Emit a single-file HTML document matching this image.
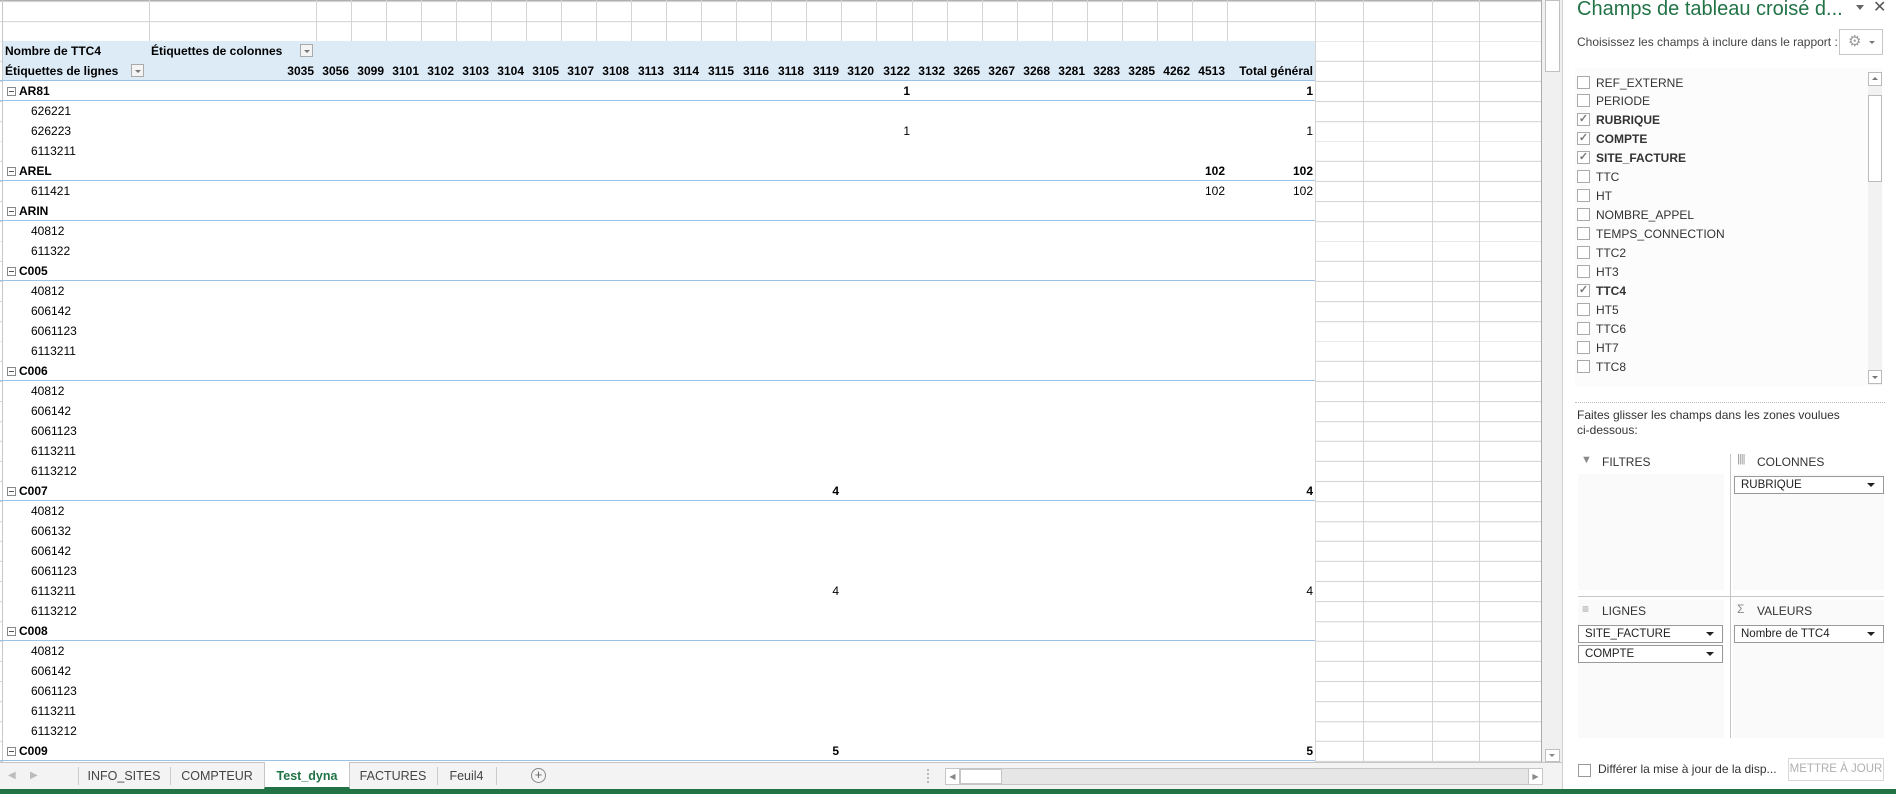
<!DOCTYPE html>
<html><head><meta charset="utf-8"><style>
*{margin:0;padding:0;box-sizing:border-box}
body{width:1896px;height:794px;overflow:hidden;background:#fff;font-family:"Liberation Sans",sans-serif;position:relative;color:#000}
.a{position:absolute}
.vl{position:absolute;top:0;width:1px;background:#d4d4d4}
.c{position:absolute;height:20px;line-height:20px;font-size:12px;white-space:nowrap}
.r{text-align:right;padding-right:2px}
.b{font-weight:bold}
.gl{position:absolute;left:0;width:1315px;height:1px;background:#9bc2e6}
.box{position:absolute;left:7px;width:9px;height:9px;border:1px solid #888;background:#fff}
.box:after{content:"";position:absolute;left:1px;top:3px;width:5px;height:1px;background:#555}
.fi{position:absolute;left:1577px;height:19px;line-height:19px;font-size:12px;color:#333;white-space:nowrap}
.cb{display:inline-block;width:13px;height:13px;border:1px solid #aaa;background:#fff;vertical-align:middle;margin-top:-2px;margin-right:6px;position:relative;font-size:11px;line-height:11px;color:#777;text-align:center}
.zb{position:absolute;height:18px;border:1px solid #999;background:#fff;font-size:11.5px;line-height:16px;padding-left:6px;color:#222}
.zb:after{content:"";position:absolute;right:8px;top:6px;border-left:4px solid transparent;border-right:4px solid transparent;border-top:4px solid #222}
.zl{position:absolute;font-size:12px;color:#333}
.tab{position:absolute;top:764px;height:24px;line-height:24px;font-size:12.5px;color:#444;text-align:center}
</style></head><body>
<div class="a" style="left:0;top:0;width:1542px;height:762px;background:repeating-linear-gradient(to bottom,#d4d4d4 0,#d4d4d4 1px,transparent 1px,transparent 20px);background-position:0 1px"></div>
<div class="a" style="left:0;top:0;width:1542px;height:1px;background:#b0b0b0"></div>
<div class="a" style="left:2px;top:0;width:1px;height:762px;background:#c8c8c8"></div>
<div class="vl" style="left:149px;height:762px"></div><div class="vl" style="left:316px;height:762px"></div>
<div class="vl" style="left:351px;height:762px"></div><div class="vl" style="left:386px;height:762px"></div><div class="vl" style="left:421px;height:762px"></div><div class="vl" style="left:456px;height:762px"></div><div class="vl" style="left:491px;height:762px"></div><div class="vl" style="left:526px;height:762px"></div><div class="vl" style="left:561px;height:762px"></div><div class="vl" style="left:596px;height:762px"></div><div class="vl" style="left:631px;height:762px"></div><div class="vl" style="left:666px;height:762px"></div><div class="vl" style="left:701px;height:762px"></div><div class="vl" style="left:736px;height:762px"></div><div class="vl" style="left:771px;height:762px"></div><div class="vl" style="left:806px;height:762px"></div><div class="vl" style="left:841px;height:762px"></div><div class="vl" style="left:876px;height:762px"></div><div class="vl" style="left:912px;height:762px"></div><div class="vl" style="left:947px;height:762px"></div><div class="vl" style="left:982px;height:762px"></div><div class="vl" style="left:1017px;height:762px"></div><div class="vl" style="left:1052px;height:762px"></div><div class="vl" style="left:1087px;height:762px"></div><div class="vl" style="left:1122px;height:762px"></div><div class="vl" style="left:1157px;height:762px"></div><div class="vl" style="left:1192px;height:762px"></div><div class="vl" style="left:1227px;height:762px"></div><div class="vl" style="left:1315px;height:762px"></div><div class="vl" style="left:1363px;height:762px"></div><div class="vl" style="left:1432px;height:762px"></div><div class="vl" style="left:1479px;height:762px"></div>
<div class="a" style="left:1541px;top:0;width:1px;height:762px;background:#aaa"></div>
<div class="a" style="left:3px;top:41px;width:1312px;height:721px;background:#fff"></div>
<div class="a" style="left:3px;top:41px;width:1312px;height:40px;background:#ddebf7"></div>
<div class="gl" style="top:80px"></div>
<div class="c b" style="left:5px;top:41px">Nombre de TTC4</div>
<div class="c b" style="left:151px;top:41px">Étiquettes de colonnes</div>
<div class="a" style="left:300px;top:44px;width:13px;height:13px;border:1px solid #aaa;background:#f4f4f4"><div class="a" style="left:3px;top:5px;border-left:3px solid transparent;border-right:3px solid transparent;border-top:3px solid #777"></div></div>
<div class="c b" style="left:5px;top:61px">Étiquettes de lignes</div>
<div class="a" style="left:131px;top:64px;width:13px;height:13px;border:1px solid #aaa;background:#f4f4f4"><div class="a" style="left:3px;top:5px;border-left:3px solid transparent;border-right:3px solid transparent;border-top:3px solid #777"></div></div>
<div class="c b r" style="left:149px;top:61px;width:167px">3035</div>
<div class="c b r" style="left:316px;top:61px;width:35px">3056</div><div class="c b r" style="left:351px;top:61px;width:35px">3099</div><div class="c b r" style="left:386px;top:61px;width:35px">3101</div><div class="c b r" style="left:421px;top:61px;width:35px">3102</div><div class="c b r" style="left:456px;top:61px;width:35px">3103</div><div class="c b r" style="left:491px;top:61px;width:35px">3104</div><div class="c b r" style="left:526px;top:61px;width:35px">3105</div><div class="c b r" style="left:561px;top:61px;width:35px">3107</div><div class="c b r" style="left:596px;top:61px;width:35px">3108</div><div class="c b r" style="left:631px;top:61px;width:35px">3113</div><div class="c b r" style="left:666px;top:61px;width:35px">3114</div><div class="c b r" style="left:701px;top:61px;width:35px">3115</div><div class="c b r" style="left:736px;top:61px;width:35px">3116</div><div class="c b r" style="left:771px;top:61px;width:35px">3118</div><div class="c b r" style="left:806px;top:61px;width:35px">3119</div><div class="c b r" style="left:841px;top:61px;width:35px">3120</div><div class="c b r" style="left:876px;top:61px;width:36px">3122</div><div class="c b r" style="left:912px;top:61px;width:35px">3132</div><div class="c b r" style="left:947px;top:61px;width:35px">3265</div><div class="c b r" style="left:982px;top:61px;width:35px">3267</div><div class="c b r" style="left:1017px;top:61px;width:35px">3268</div><div class="c b r" style="left:1052px;top:61px;width:35px">3281</div><div class="c b r" style="left:1087px;top:61px;width:35px">3283</div><div class="c b r" style="left:1122px;top:61px;width:35px">3285</div><div class="c b r" style="left:1157px;top:61px;width:35px">4262</div><div class="c b r" style="left:1192px;top:61px;width:35px">4513</div><div class="c b r" style="left:1227px;top:61px;width:88px">Total général</div>

<div class="box" style="top:87px"></div><div class="c b" style="left:19px;top:81px">AR81</div><div class="gl" style="top:100px"></div>
<div class="c b r" style="left:876px;top:81px;width:36px">1</div><div class="c b r" style="left:1227px;top:81px;width:88px">1</div>
<div class="c" style="left:31px;top:101px">626221</div>
<div class="c" style="left:31px;top:121px">626223</div><div class="c r" style="left:876px;top:121px;width:36px">1</div><div class="c r" style="left:1227px;top:121px;width:88px">1</div>
<div class="c" style="left:31px;top:141px">6113211</div>
<div class="box" style="top:167px"></div><div class="c b" style="left:19px;top:161px">AREL</div><div class="gl" style="top:180px"></div>
<div class="c b r" style="left:1192px;top:161px;width:35px">102</div><div class="c b r" style="left:1227px;top:161px;width:88px">102</div>
<div class="c" style="left:31px;top:181px">611421</div><div class="c r" style="left:1192px;top:181px;width:35px">102</div><div class="c r" style="left:1227px;top:181px;width:88px">102</div>
<div class="box" style="top:207px"></div><div class="c b" style="left:19px;top:201px">ARIN</div><div class="gl" style="top:220px"></div>
<div class="c" style="left:31px;top:221px">40812</div>
<div class="c" style="left:31px;top:241px">611322</div>
<div class="box" style="top:267px"></div><div class="c b" style="left:19px;top:261px">C005</div><div class="gl" style="top:280px"></div>
<div class="c" style="left:31px;top:281px">40812</div>
<div class="c" style="left:31px;top:301px">606142</div>
<div class="c" style="left:31px;top:321px">6061123</div>
<div class="c" style="left:31px;top:341px">6113211</div>
<div class="box" style="top:367px"></div><div class="c b" style="left:19px;top:361px">C006</div><div class="gl" style="top:380px"></div>
<div class="c" style="left:31px;top:381px">40812</div>
<div class="c" style="left:31px;top:401px">606142</div>
<div class="c" style="left:31px;top:421px">6061123</div>
<div class="c" style="left:31px;top:441px">6113211</div>
<div class="c" style="left:31px;top:461px">6113212</div>
<div class="box" style="top:487px"></div><div class="c b" style="left:19px;top:481px">C007</div><div class="gl" style="top:500px"></div>
<div class="c b r" style="left:806px;top:481px;width:35px">4</div><div class="c b r" style="left:1227px;top:481px;width:88px">4</div>
<div class="c" style="left:31px;top:501px">40812</div>
<div class="c" style="left:31px;top:521px">606132</div>
<div class="c" style="left:31px;top:541px">606142</div>
<div class="c" style="left:31px;top:561px">6061123</div>
<div class="c" style="left:31px;top:581px">6113211</div><div class="c r" style="left:806px;top:581px;width:35px">4</div><div class="c r" style="left:1227px;top:581px;width:88px">4</div>
<div class="c" style="left:31px;top:601px">6113212</div>
<div class="box" style="top:627px"></div><div class="c b" style="left:19px;top:621px">C008</div><div class="gl" style="top:640px"></div>
<div class="c" style="left:31px;top:641px">40812</div>
<div class="c" style="left:31px;top:661px">606142</div>
<div class="c" style="left:31px;top:681px">6061123</div>
<div class="c" style="left:31px;top:701px">6113211</div>
<div class="c" style="left:31px;top:721px">6113212</div>
<div class="box" style="top:747px"></div><div class="c b" style="left:19px;top:741px">C009</div><div class="gl" style="top:760px"></div>
<div class="c b r" style="left:806px;top:741px;width:35px">5</div><div class="c b r" style="left:1227px;top:741px;width:88px">5</div>

<div class="a" style="left:1542px;top:0;width:20px;height:764px;background:#f0f0f0"></div>
<div class="a" style="left:1545px;top:0;width:15px;height:72px;background:#fff;border:1px solid #c0c0c0"></div>
<div class="a" style="left:1545px;top:749px;width:15px;height:13px;background:#fff;border:1px solid #c0c0c0"><div class="a" style="left:3px;top:4px;border-left:3px solid transparent;border-right:3px solid transparent;border-top:3px solid #888"></div></div>

<div class="a" style="left:0;top:762px;width:1562px;height:28px;background:#f3f3f3;border-top:1px solid #c6c6c6"></div>
<div class="a" style="left:8px;top:770px;font-size:10px;color:#bbb">◀</div><div class="a" style="left:30px;top:770px;font-size:10px;color:#bbb">▶</div>
<div class="a" style="left:78px;top:767px;width:1px;height:18px;background:#ccc"></div>
<div class="a" style="left:170px;top:767px;width:1px;height:18px;background:#ccc"></div>
<div class="a" style="left:349px;top:767px;width:1px;height:18px;background:#ccc"></div>
<div class="a" style="left:437px;top:767px;width:1px;height:18px;background:#ccc"></div>
<div class="a" style="left:496px;top:767px;width:1px;height:18px;background:#ccc"></div>
<div class="a" style="left:264px;top:762px;width:86px;height:27px;background:#fff;border:1px solid #c6c6c6;border-top:none;border-bottom:2px solid #217346"></div>
<div class="tab" style="left:78px;width:92px">INFO_SITES</div>
<div class="tab" style="left:170px;width:94px">COMPTEUR</div>
<div class="tab" style="left:264px;width:86px;color:#217346;font-weight:bold">Test_dyna</div>
<div class="tab" style="left:349px;width:88px">FACTURES</div>
<div class="tab" style="left:437px;width:59px">Feuil4</div>
<div class="a" style="left:531px;top:768px;width:15px;height:15px;border:1px solid #888;border-radius:50%;text-align:center;line-height:12px;font-size:13px;color:#666">+</div>
<div class="a" style="left:927px;top:769px;width:2px;height:14px;border-left:2px dotted #bbb"></div>
<div class="a" style="left:945px;top:768px;width:598px;height:17px;background:#e6e6e6;border:1px solid #c6c6c6"></div>
<div class="a" style="left:946px;top:769px;width:14px;height:15px;background:#fff;border-right:1px solid #c6c6c6;font-size:8px;color:#888;text-align:center;line-height:15px">◀</div>
<div class="a" style="left:960px;top:769px;width:42px;height:15px;background:#fff;border:1px solid #c6c6c6"></div>
<div class="a" style="left:1528px;top:769px;width:14px;height:15px;background:#fff;border-left:1px solid #c6c6c6;font-size:8px;color:#888;text-align:center;line-height:15px">▶</div>

<div class="a" style="left:1562px;top:0;width:334px;height:790px;background:#fff;border-left:1px solid #d0d0d0"></div>
<div class="a" style="left:1577px;top:-2px;font-size:20px;color:#217346;white-space:nowrap">Champs de tableau croisé d...</div>
<div class="a" style="left:1856px;top:5px;border-left:4px solid transparent;border-right:4px solid transparent;border-top:5px solid #666"></div>
<div class="a" style="left:1873px;top:-3px;font-size:16px;color:#555">✕</div>
<div class="a" style="left:1577px;top:35px;font-size:12px;color:#444;white-space:nowrap">Choisissez les champs à inclure dans le rapport :</div>
<div class="a" style="left:1839px;top:29px;width:44px;height:26px;border:1px solid #c6c6c6;background:#fff"><span class="a" style="left:8px;top:2px;font-size:15px;color:#999">⚙</span><div class="a" style="left:29px;top:11px;border-left:3px solid transparent;border-right:3px solid transparent;border-top:3px solid #777"></div></div>
<div class="a" style="left:1575px;top:68px;width:308px;height:318px;background:#fcfcfc"></div>
<div class="a" style="left:1868px;top:72px;width:14px;height:313px;background:#f2f2f2"></div>
<div class="a" style="left:1868px;top:72px;width:14px;height:14px;border:1px solid #bbb;background:#fff"><div class="a" style="left:3px;top:4px;border-left:3px solid transparent;border-right:3px solid transparent;border-bottom:3px solid #777"></div></div>
<div class="a" style="left:1868px;top:95px;width:14px;height:87px;border:1px solid #bbb;background:#fff"></div>
<div class="a" style="left:1868px;top:370px;width:14px;height:14px;border:1px solid #bbb;background:#fff"><div class="a" style="left:3px;top:5px;border-left:3px solid transparent;border-right:3px solid transparent;border-top:3px solid #777"></div></div>
<div class="fi" style="top:74px"><span class="cb"></span>REF_EXTERNE</div>
<div class="fi" style="top:92px"><span class="cb"></span>PERIODE</div>
<div class="fi b" style="top:111px"><span class="cb">✓</span>RUBRIQUE</div>
<div class="fi b" style="top:130px"><span class="cb">✓</span>COMPTE</div>
<div class="fi b" style="top:149px"><span class="cb">✓</span>SITE_FACTURE</div>
<div class="fi" style="top:168px"><span class="cb"></span>TTC</div>
<div class="fi" style="top:187px"><span class="cb"></span>HT</div>
<div class="fi" style="top:206px"><span class="cb"></span>NOMBRE_APPEL</div>
<div class="fi" style="top:225px"><span class="cb"></span>TEMPS_CONNECTION</div>
<div class="fi" style="top:244px"><span class="cb"></span>TTC2</div>
<div class="fi" style="top:263px"><span class="cb"></span>HT3</div>
<div class="fi b" style="top:282px"><span class="cb">✓</span>TTC4</div>
<div class="fi" style="top:301px"><span class="cb"></span>HT5</div>
<div class="fi" style="top:320px"><span class="cb"></span>TTC6</div>
<div class="fi" style="top:339px"><span class="cb"></span>HT7</div>
<div class="fi" style="top:358px"><span class="cb"></span>TTC8</div>
<div class="a" style="left:1575px;top:386px;width:320px;height:4px;background:#fff"></div>
<div class="a" style="left:1575px;top:402px;width:310px;height:1px;border-top:1px dotted #bbb"></div>
<div class="a" style="left:1577px;top:408px;font-size:12px;color:#333;line-height:15px">Faites glisser les champs dans les zones voulues<br>ci-dessous:</div>
<div class="a" style="left:1578px;top:474px;width:146px;height:116px;background:#fafafa"></div>
<div class="a" style="left:1733px;top:474px;width:151px;height:116px;background:#fafafa"></div>
<div class="a" style="left:1578px;top:600px;width:146px;height:138px;background:#fafafa"></div>
<div class="a" style="left:1733px;top:600px;width:151px;height:138px;background:#fafafa"></div>
<div class="a" style="left:1730px;top:454px;width:1px;height:284px;background:#c6c6c6"></div>
<div class="a" style="left:1578px;top:596px;width:306px;height:1px;background:#c6c6c6"></div>
<div class="zl" style="left:1581px;top:454px;color:#888;font-size:11px">▼</div>
<div class="zl" style="left:1602px;top:455px">FILTRES</div>
<div class="zl" style="left:1737px;top:453px;color:#999;font-size:11px;letter-spacing:-1px">||||</div>
<div class="zl" style="left:1757px;top:455px">COLONNES</div>
<div class="zl" style="left:1582px;top:602px;color:#999;font-size:12px">≡</div>
<div class="zl" style="left:1602px;top:604px">LIGNES</div>
<div class="zl" style="left:1737px;top:602px;color:#888;font-size:12px">Σ</div>
<div class="zl" style="left:1757px;top:604px">VALEURS</div>
<div class="zb" style="left:1734px;top:476px;width:150px">RUBRIQUE</div>
<div class="zb" style="left:1578px;top:625px;width:145px">SITE_FACTURE</div>
<div class="zb" style="left:1578px;top:645px;width:145px">COMPTE</div>
<div class="zb" style="left:1734px;top:625px;width:150px">Nombre de TTC4</div>
<div class="a" style="left:1578px;top:764px;width:13px;height:13px;border:1px solid #999;background:#fff"></div>
<div class="a" style="left:1598px;top:762px;font-size:12px;color:#333;white-space:nowrap">Différer la mise à jour de la disp...</div>
<div class="a" style="left:1788px;top:758px;width:96px;height:23px;border:1px solid #d8d8d8;font-size:11.5px;color:#b0b0b0;text-align:center;line-height:21px">METTRE À JOUR</div>
<div class="a" style="left:0;top:789px;width:1896px;height:5px;background:#217346"></div>
</body></html>
